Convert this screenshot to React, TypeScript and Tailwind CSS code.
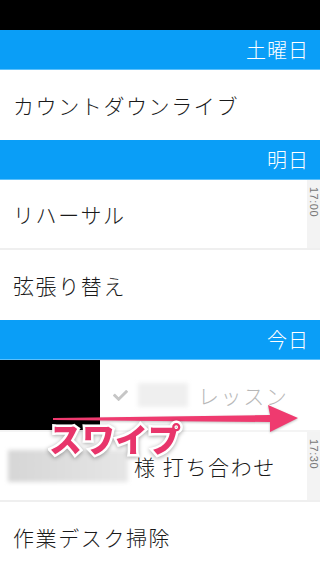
import { FaCheck } from "react-icons/fa";

const jp = { fontFamily: '"Noto Sans CJK JP", "Noto Sans", sans-serif' };

const Header = ({ label }: { label: string }) => (
  <div className="h-[40px] bg-[#0a9ef7] border-b border-[#5cc0fb] flex items-center justify-end pr-[11px]">
    <span className="text-white text-[20px] font-light tracking-[1px] leading-none">{label}</span>
  </div>
);

const TimeStrip = ({ time }: { time: string }) => (
  <div className="w-[13px] self-stretch bg-[#f3f3f3] flex justify-center pt-[7px]">
    <span className="[writing-mode:vertical-rl] text-[11px] tracking-[0.5px] leading-none text-[#777]" style={{ fontFamily: '"Liberation Sans", sans-serif' }}>
      {time}
    </span>
  </div>
);

const Row = ({ children, time, divider }: { children: React.ReactNode; time?: string; divider?: boolean }) => (
  <div className={`h-[70px] flex items-center ${divider ? "border-b-2 border-[#efefef]" : ""}`}>
    <div className="flex-1 pl-[13px] flex items-center">{children}</div>
    {time && <TimeStrip time={time} />}
  </div>
);

const Label = ({ text }: { text: string }) => (
  <span className="text-[21px] font-light tracking-[1.6px] text-[#1a1a1a] leading-none">{text}</span>
);

export default function App() {
  return (
    <div className="relative w-[320px] h-[568px] overflow-hidden bg-white" style={jp}>
      <div className="h-[30px] bg-black" />

      <Header label="土曜日" />
      <Row>
        <Label text="カウントダウンライブ" />
      </Row>

      <Header label="明日" />
      <Row time="17:00" divider>
        <Label text="リハーサル" />
      </Row>
      <Row>
        <Label text="弦張り替え" />
      </Row>

      <Header label="今日" />
      {/* swiped row */}
      <div className="h-[70px] flex items-center">
        <div className="w-[100px] h-full bg-black" />
        <div className="flex items-center pl-[13px] gap-[10px]">
          <FaCheck className="text-[#c6c6c6]" size={15} />
          <div className="w-[50px] h-[24px] bg-[#efefef] blur-[2px]" />
          <span className="text-[21px] font-light tracking-[1.6px] text-[#b8b8b8] leading-none">レッスン</span>
        </div>
      </div>
      <div className="h-[2px] bg-[#f4f4f4]" />
      <Row time="17:30" divider>
        <div className="flex items-center">
          <div className="w-[120px] h-[32px] -ml-[5px] mr-[6px] bg-gradient-to-r from-[#d6d6d6] to-[#e6e6e6] blur-[2px]" />
          <Label text="様 打ち合わせ" />
        </div>
      </Row>
      <Row>
        <Label text="作業デスク掃除" />
      </Row>

      {/* swipe hint overlay */}
      <svg className="absolute left-[50px] top-[400px] drop-shadow-[0_1px_1px_rgba(0,0,0,0.25)]" width="255" height="36" viewBox="0 0 255 36">
        <polygon points="3,18 220,15 218,5 248,18 220,32 220,22 3,20" fill="#ef3a6f" />
      </svg>
      <span
        className="absolute left-[49px] top-[422px] text-[33px] font-black text-[#e8356b] leading-none [-webkit-text-stroke:5px_white] [paint-order:stroke_fill] drop-shadow-[0_1px_2px_rgba(0,0,0,0.35)]"
      >
        スワイプ
      </span>
    </div>
  );
}
